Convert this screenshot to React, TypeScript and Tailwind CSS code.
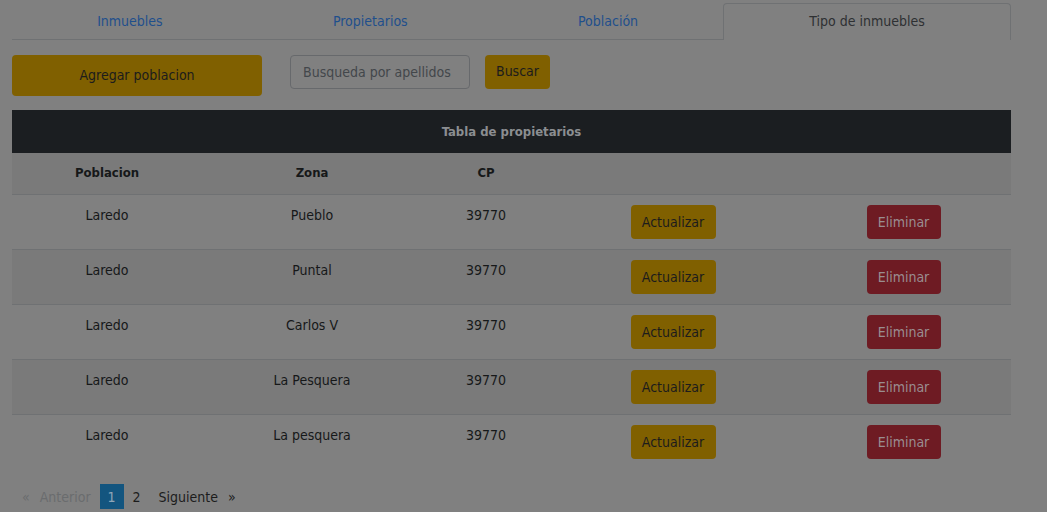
import React from "react";

// Poblaciones page, shown under a modal backdrop (everything dimmed by half).

const font = {
  fontFamily: '"DejaVu Sans Condensed", "Liberation Sans", sans-serif',
};

const tabs = [
  { label: "Inmuebles", active: false },
  { label: "Propietarios", active: false },
  { label: "Población", active: false },
  { label: "Tipo de inmuebles", active: true },
];

const rows = [
  { poblacion: "Laredo", zona: "Pueblo", cp: "39770" },
  { poblacion: "Laredo", zona: "Puntal", cp: "39770" },
  { poblacion: "Laredo", zona: "Carlos V", cp: "39770" },
  { poblacion: "Laredo", zona: "La Pesquera", cp: "39770" },
  { poblacion: "Laredo", zona: "La pesquera", cp: "39770" },
];

function Tabs() {
  return (
    <div className="mt-[3px] flex border-b border-[#6f7173]">
      {tabs.map((t) =>
        t.active ? (
          <div
            key={t.label}
            className="-mb-px flex h-[37px] flex-auto items-center justify-center rounded-t-[4px] border border-b-0 border-[#6f7173] bg-[#808080] px-4 pb-[3px] leading-6 text-[#2e3033]"
          >
            {t.label}
          </div>
        ) : (
          <div
            key={t.label}
            className="flex h-[36px] flex-auto items-center justify-center px-4 pb-px leading-6 text-[#1f4f8c]"
          >
            {t.label}
          </div>
        ),
      )}
    </div>
  );
}

function Toolbar() {
  return (
    <div className="mt-[15px] flex items-start">
      <button
        type="button"
        className="h-[41px] w-[250px] rounded-[4px] bg-[#806000] pb-px text-[#1c1c1c]"
      >
        Agregar poblacion
      </button>
      <div className="ml-[28px] flex h-[34px] w-[180px] items-center whitespace-nowrap rounded-[4px] border border-[#67696c] px-3 text-[#43474b]">
        Busqueda por apellidos
      </div>
      <button
        type="button"
        className="ml-[15px] h-[34px] w-[65px] rounded-[4px] bg-[#806000] pb-[2px] text-[#1c1c1c]"
      >
        Buscar
      </button>
    </div>
  );
}

const cols = ["w-[190px]", "w-[220px]", "w-[128px]", "w-[246px]", "w-[215px]"];

function Table() {
  return (
    <div className="mt-[14px] w-[999px] text-[#161819]">
      <div className="flex h-[43px] items-center justify-center bg-[#1b1e21] text-[13px] font-bold text-[#8b8e91]">
        Tabla de propietarios
      </div>
      <div className="flex h-[42px] border-b border-[#6f7173] bg-[#7a7a7a] pt-2 text-[13px] font-bold leading-6">
        <div className={`${cols[0]} text-center`}>Poblacion</div>
        <div className={`${cols[1]} text-center`}>Zona</div>
        <div className={`${cols[2]} text-center`}>CP</div>
        <div className={cols[3]} />
        <div className={cols[4]} />
      </div>
      {rows.map((r, i) => (
        <div
          key={i}
          className={`flex leading-6 ${
            i === 0 ? "h-[54px]" : "h-[55px] border-t border-[#6f7173]"
          } ${i % 2 === 1 ? "bg-[#7a7a7a]" : "bg-[#808080]"}`}
        >
          <div className={`${cols[0]} pt-2 text-center`}>{r.poblacion}</div>
          <div className={`${cols[1]} pt-2 text-center`}>{r.zona}</div>
          <div className={`${cols[2]} pt-2 text-center`}>{r.cp}</div>
          <div className={`${cols[3]} flex justify-center pt-[10px]`}>
            <button
              type="button"
              className="h-[34px] w-[85px] rounded-[4px] bg-[#806000] text-[#1c1c1c]"
            >
              Actualizar
            </button>
          </div>
          <div className={`${cols[4]} flex justify-center pt-[10px]`}>
            <button
              type="button"
              className="h-[34px] w-[74px] rounded-[4px] bg-[#6e1b23] text-[#9a8d90]"
            >
              Eliminar
            </button>
          </div>
        </div>
      ))}
    </div>
  );
}

function Pagination() {
  return (
    <div className="mt-[15px] flex h-[25px] items-center pl-[10px] leading-6">
      <span className="text-[#6a6c6e]">«</span>
      <span className="ml-[10px] text-[#6a6c6e]">Anterior</span>
      <span className="ml-[9px] flex h-[25px] w-[24px] items-center justify-center bg-[#13557f] text-[#8fa6b8]">
        1
      </span>
      <span className="ml-[9px] text-[#1c1c1c]">2</span>
      <span className="ml-[18px] text-[#1c1c1c]">Siguiente</span>
      <span className="ml-[10px] text-[#1c1c1c]">»</span>
    </div>
  );
}

export default function App() {
  return (
    <div
      className="h-[512px] w-[1047px] overflow-hidden bg-[#808080] text-[14px]"
      style={font}
    >
      <div className="w-[1011px] pl-3">
        <Tabs />
        <Toolbar />
        <Table />
        <Pagination />
      </div>
    </div>
  );
}
